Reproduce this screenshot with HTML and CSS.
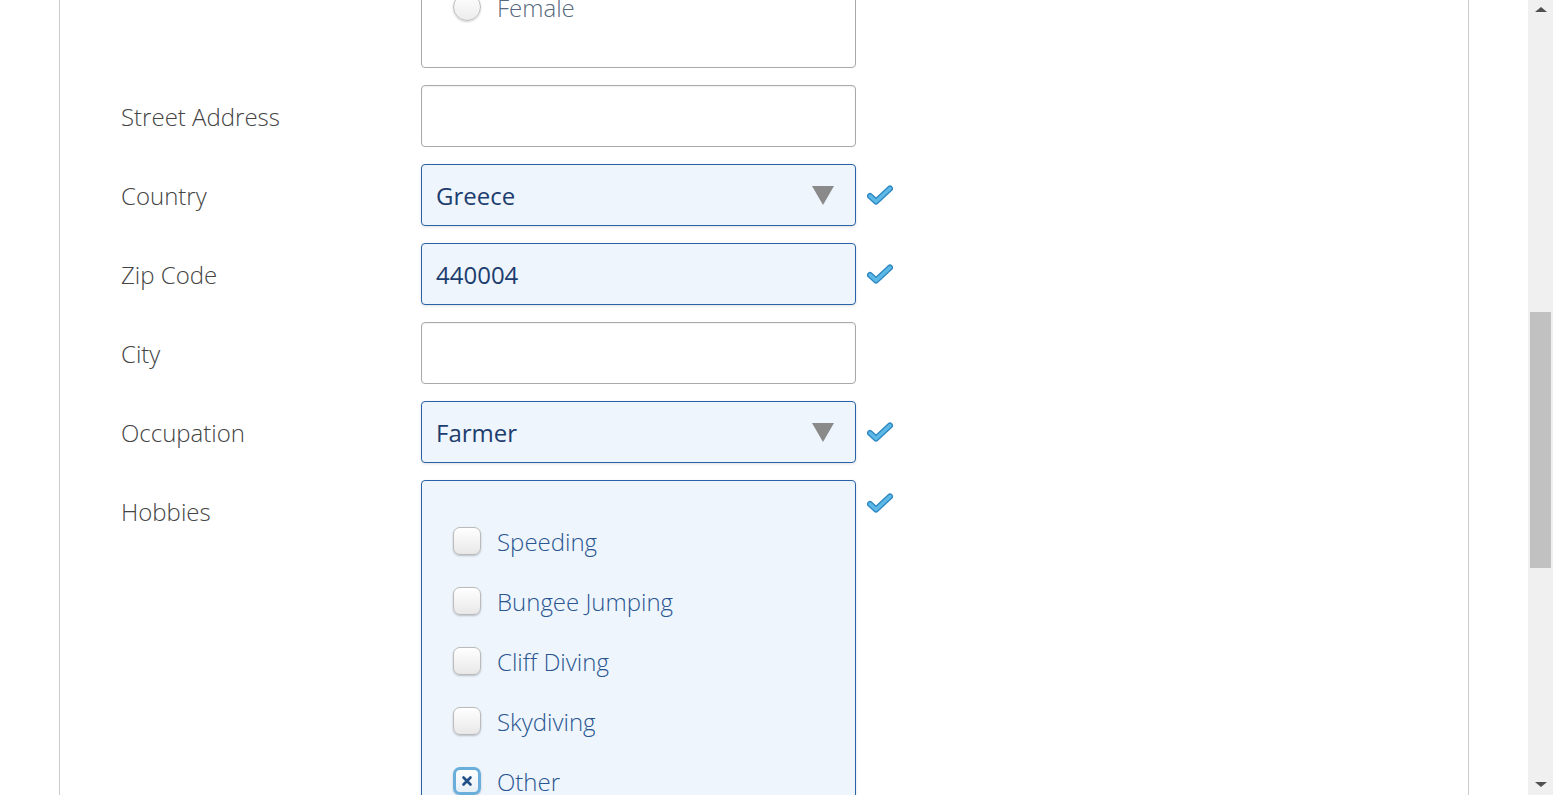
FILE: index.html
```html
<!DOCTYPE html>
<html>
<head>
<meta charset="utf-8">
<link rel="stylesheet" href="styles.css">
</head>
<body>
<div class="page">
  <div class="viewport">
    <div class="card">
      <form class="form">
        <div class="row">
          <div class="label">Gender</div>
          <div class="field box">
            <div class="opt"><span class="radio"></span><span class="opt-text plain">Male</span></div>
            <div class="opt"><span class="radio"></span><span class="opt-text plain">Female</span></div>
          </div>
          <div></div>
        </div>

        <div class="row">
          <div class="label">Street Address</div>
          <div class="field input"></div>
          <div></div>
        </div>

        <div class="row">
          <div class="label">Country</div>
          <div class="field input valid select"><span class="value">Greece</span>
            <svg class="arrow" width="22" height="19" viewBox="0 0 22 19"><polygon points="0,0 22,0 11,19" fill="#8a8a8a"/></svg>
          </div>
          <svg class="check" width="26" height="20" viewBox="0 0 26 20"><path d="M3 11 L9 16.5 L23 3.5" fill="none" stroke="#2d86c0" stroke-width="6" stroke-linecap="round" stroke-linejoin="round"/><path d="M3 11 L9 16.5 L23 3.5" fill="none" stroke="#5cb8e6" stroke-width="3.4" stroke-linecap="round" stroke-linejoin="round"/></svg>
        </div>

        <div class="row">
          <div class="label">Zip Code</div>
          <div class="field input valid"><span class="value">440004</span></div>
          <svg class="check" width="26" height="20" viewBox="0 0 26 20"><path d="M3 11 L9 16.5 L23 3.5" fill="none" stroke="#2d86c0" stroke-width="6" stroke-linecap="round" stroke-linejoin="round"/><path d="M3 11 L9 16.5 L23 3.5" fill="none" stroke="#5cb8e6" stroke-width="3.4" stroke-linecap="round" stroke-linejoin="round"/></svg>
        </div>

        <div class="row">
          <div class="label">City</div>
          <div class="field input"></div>
          <div></div>
        </div>

        <div class="row">
          <div class="label">Occupation</div>
          <div class="field input valid select"><span class="value">Farmer</span>
            <svg class="arrow" width="22" height="19" viewBox="0 0 22 19"><polygon points="0,0 22,0 11,19" fill="#8a8a8a"/></svg>
          </div>
          <svg class="check" width="26" height="20" viewBox="0 0 26 20"><path d="M3 11 L9 16.5 L23 3.5" fill="none" stroke="#2d86c0" stroke-width="6" stroke-linecap="round" stroke-linejoin="round"/><path d="M3 11 L9 16.5 L23 3.5" fill="none" stroke="#5cb8e6" stroke-width="3.4" stroke-linecap="round" stroke-linejoin="round"/></svg>
        </div>

        <div class="row">
          <div class="label">Hobbies</div>
          <div class="field box valid">
            <div class="opt"><span class="cbox"></span><span class="opt-text">Speeding</span></div>
            <div class="opt"><span class="cbox"></span><span class="opt-text">Bungee Jumping</span></div>
            <div class="opt"><span class="cbox"></span><span class="opt-text">Cliff Diving</span></div>
            <div class="opt"><span class="cbox"></span><span class="opt-text">Skydiving</span></div>
            <div class="opt"><span class="cbox checked"><svg width="12" height="12" viewBox="0 0 12 12"><path d="M2.5 2.5 L9.5 9.5 M9.5 2.5 L2.5 9.5" stroke="#1f4f86" stroke-width="2.6" stroke-linecap="round"/></svg></span><span class="opt-text">Other</span></div>
            <div class="opt"><span class="cbox"></span><span class="opt-text">Reading</span></div>
          </div>
          <svg class="check top" width="26" height="20" viewBox="0 0 26 20"><path d="M3 11 L9 16.5 L23 3.5" fill="none" stroke="#2d86c0" stroke-width="6" stroke-linecap="round" stroke-linejoin="round"/><path d="M3 11 L9 16.5 L23 3.5" fill="none" stroke="#5cb8e6" stroke-width="3.4" stroke-linecap="round" stroke-linejoin="round"/></svg>
        </div>
      </form>
    </div>
  </div>
  <div class="scrollbar">
    <div class="sb-arrow up"></div>
    <div class="sb-track"><div class="sb-thumb"></div></div>
    <div class="sb-arrow down"></div>
  </div>
</div>
</body>
</html>
```

FILE: styles.css
```css
html, body {
  margin: 0;
  padding: 0;
  height: 100%;
  overflow: hidden;
  background: #ffffff;
  font-family: "Open Sans", "DejaVu Sans", sans-serif;
}

.page {
  display: flex;
  height: 795px;
}

.viewport {
  flex: 1;
  overflow: hidden;
  display: flex;
  justify-content: center;
}

.card {
  width: 1408px;
  border-left: 1px solid #cccccc;
  border-right: 1px solid #cccccc;
  background: #ffffff;
}

.form {
  margin-top: -114px;
  padding-left: 61px;
  display: flex;
  flex-direction: column;
  gap: 17px;
}

.row {
  display: grid;
  grid-template-columns: 300px 435px 40px;
  align-items: start;
}

.label {
  height: 62px;
  display: flex;
  align-items: center;
  font-size: 24px;
  font-weight: 300;
  color: #444444;
}

.field {
  box-sizing: border-box;
  border: 1px solid #a9a9a9;
  border-radius: 4px;
  background: #ffffff;
}

.input {
  height: 62px;
  display: flex;
  align-items: center;
  padding: 0 21px 0 14px;
  box-shadow: inset 0 1px 2px rgba(0,0,0,0.06);
}

.valid {
  background: #eef5fd;
  border-color: #2a62a8;
  box-shadow: 0 1px 3px rgba(0,0,0,0.12);
}

.value {
  flex: 1;
  font-size: 24px;
  color: #1d3d6e;
}

.arrow {
  display: block;
}

.box {
  padding: 30px 0 30px 31px;
}

.opt {
  height: 60px;
  display: flex;
  align-items: center;
  gap: 16px;
}

.opt-text {
  font-size: 24px;
  font-weight: 300;
  color: #2a5690;
}

.opt-text.plain {
  color: #56697e;
}

.radio {
  width: 28px;
  height: 28px;
  box-sizing: border-box;
  border-radius: 50%;
  border: 1px solid #bdbdbd;
  background: linear-gradient(#ffffff, #ececec);
  box-shadow: 0 1px 2px rgba(0,0,0,0.18);
}

.cbox {
  width: 28px;
  height: 28px;
  box-sizing: border-box;
  border-radius: 7px;
  border: 1px solid #bbbbbb;
  background: linear-gradient(#ffffff, #e8e8e8);
  box-shadow: 0 1px 2px rgba(0,0,0,0.22);
  display: flex;
  align-items: center;
  justify-content: center;
}

.cbox.checked {
  border: 3px solid #6aafdc;
  background: linear-gradient(#ffffff, #e6eef6);
}

.check {
  display: block;
  margin-top: 21px;
  margin-left: 11px;
}

.check.top {
  margin-top: 13px;
}

.scrollbar {
  width: 25px;
  background: #f0f0f0;
  display: flex;
  flex-direction: column;
  align-items: center;
}

.sb-arrow {
  width: 0;
  height: 0;
  border-left: 6px solid transparent;
  border-right: 6px solid transparent;
}

.sb-arrow.up {
  margin-top: 7px;
  border-bottom: 5px solid #505050;
}

.sb-arrow.down {
  margin-bottom: 8px;
  border-top: 5px solid #505050;
}

.sb-track {
  flex: 1;
  width: 100%;
  padding-top: 300px;
  box-sizing: border-box;
  display: flex;
  justify-content: center;
}

.sb-thumb {
  width: 21px;
  height: 256px;
  background: #c1c1c1;
}
```
